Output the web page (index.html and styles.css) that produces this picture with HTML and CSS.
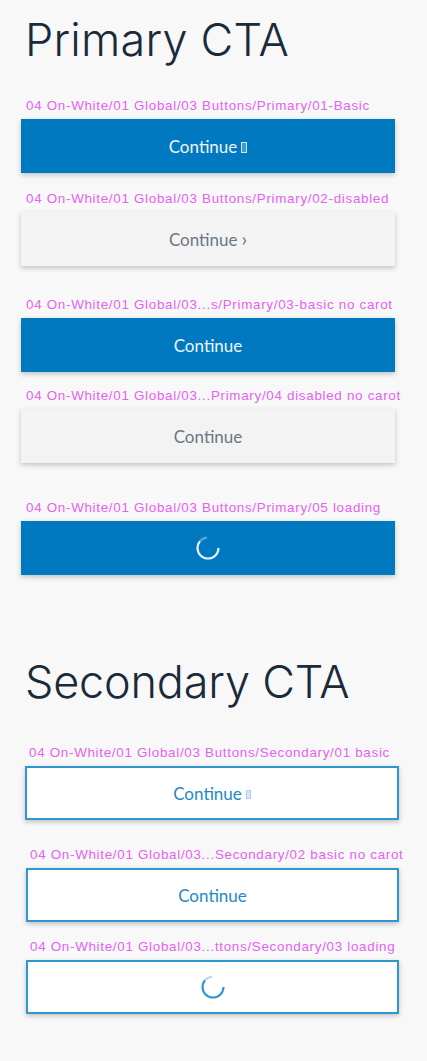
FILE: index.html
```html
<!DOCTYPE html>
<html>
<head>
<meta charset="utf-8">
<link rel="stylesheet" href="styles.css">
</head>
<body>
<main class="page">
  <section class="group primary">
    <h1 class="title">Primary CTA</h1>
    <div class="item gap-a">
      <div class="label">04 On-White/01 Global/03 Buttons/Primary/01-Basic</div>
      <div class="btn btn-primary">Continue <span class="tofu"></span></div>
    </div>
    <div class="item gap-b">
      <div class="label">04 On-White/01 Global/03 Buttons/Primary/02-disabled</div>
      <div class="btn btn-disabled">Continue <span class="caret">›</span></div>
    </div>
    <div class="item gap-c">
      <div class="label">04 On-White/01 Global/03...s/Primary/03-basic no carot</div>
      <div class="btn btn-primary">Continue</div>
    </div>
    <div class="item gap-d">
      <div class="label">04 On-White/01 Global/03...Primary/04 disabled no carot</div>
      <div class="btn btn-disabled">Continue</div>
    </div>
    <div class="item gap-e">
      <div class="label">04 On-White/01 Global/03 Buttons/Primary/05 loading</div>
      <div class="btn btn-primary">
        <svg class="spinner" viewBox="0 0 26 26" width="26" height="26">
          <circle cx="13" cy="13" r="10.5" fill="none" stroke="#ffffff" stroke-opacity="0.35" stroke-width="2.2" stroke-dasharray="8 60" stroke-dashoffset="-40"/>
          <circle cx="13" cy="13" r="10.5" fill="none" stroke="#ffffff" stroke-opacity="0.9" stroke-width="2.2" stroke-dasharray="44 60" stroke-dashoffset="4"/>
        </svg>
      </div>
    </div>
  </section>

  <section class="group secondary">
    <h1 class="title">Secondary CTA</h1>
    <div class="item gap-f">
      <div class="label">04 On-White/01 Global/03 Buttons/Secondary/01 basic</div>
      <div class="btn btn-secondary">Continue <span class="tofu tofu-blue"></span></div>
    </div>
    <div class="item gap-g shift">
      <div class="label">04 On-White/01 Global/03...Secondary/02 basic no carot</div>
      <div class="btn btn-secondary">Continue</div>
    </div>
    <div class="item gap-h shift">
      <div class="label">04 On-White/01 Global/03...ttons/Secondary/03 loading</div>
      <div class="btn btn-secondary">
        <svg class="spinner" viewBox="0 0 26 26" width="26" height="26">
          <circle cx="13" cy="13" r="10.5" fill="none" stroke="#1b8ccc" stroke-opacity="0.3" stroke-width="2.2" stroke-dasharray="8 60" stroke-dashoffset="-40"/>
          <circle cx="13" cy="13" r="10.5" fill="none" stroke="#1b8ccc" stroke-opacity="0.9" stroke-width="2.2" stroke-dasharray="44 60" stroke-dashoffset="4"/>
        </svg>
      </div>
    </div>
  </section>
</main>
</body>
</html>
```

FILE: styles.css
```css
html, body {
  margin: 0;
  padding: 0;
  background: #f8f8f8;
}

.page {
  width: 427px;
  min-height: 1061px;
  display: flex;
  flex-direction: column;
}

.group {
  display: flex;
  flex-direction: column;
}

.primary {
  padding-left: 21px;
  width: 374px;
}

.secondary {
  padding-left: 25px;
  width: 374px;
  margin-top: 84px;
}

.title {
  margin: 0;
  font-family: "Inter", "Liberation Sans", sans-serif;
  font-weight: 300;
  font-size: 45px;
  line-height: 1;
  color: #1b2a3b;
  letter-spacing: 0.2px;
  padding-left: 4px;
}

.secondary .title {
  padding-left: 0;
  letter-spacing: -0.2px;
}

.primary .title {
  margin-top: 17px;
}

.item {
  display: flex;
  flex-direction: column;
  gap: 6px;
}

.label {
  font-family: "Liberation Sans", Arial, sans-serif;
  font-size: 13.4px;
  letter-spacing: 0.7px;
  line-height: 14px;
  height: 14px;
  color: #e462ef;
  padding-left: 5px;
  white-space: nowrap;
}

.secondary .label {
  padding-left: 4px;
}

.gap-a { margin-top: 37px; }
.gap-b { margin-top: 19px; }
.gap-c { margin-top: 32px; }
.gap-d { margin-top: 17px; }
.gap-e { margin-top: 38px; }
.gap-f { margin-top: 42px; }
.gap-g { margin-top: 28px; }
.gap-h { margin-top: 18px; }

.shift {
  margin-left: 1px;
}

.btn {
  height: 54px;
  box-sizing: border-box;
  display: flex;
  align-items: center;
  justify-content: center;
  gap: 4px;
  font-family: "Lato", "Open Sans", sans-serif;
  font-size: 17px;
  box-shadow: 0 2px 5px rgba(0, 0, 0, 0.22);
}

.btn-primary {
  background: #0079c1;
  color: #eef6fb;
}

.btn-disabled {
  background: #f3f3f3;
  color: #6b7684;
}

.btn-secondary {
  background: #ffffff;
  color: #1e88c9;
  border: 2px solid #2f96d0;
}

.caret {
  font-size: 20px;
  line-height: 1;
  margin-top: -2px;
}

.tofu {
  display: inline-block;
  width: 4px;
  height: 9px;
  border: 1px solid rgba(255, 255, 255, 0.75);
  background: rgba(255, 255, 255, 0.25);
  margin-top: 2px;
}

.tofu-blue {
  width: 3px;
  height: 7px;
  border-color: #a9cfe6;
  background: #d6e8f3;
}

.spinner {
  display: block;
}
```
